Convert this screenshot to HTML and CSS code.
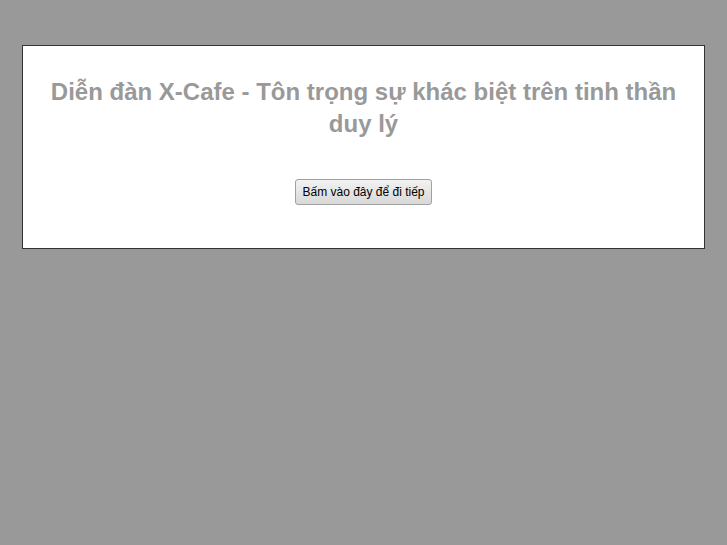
FILE: index.html
```html
<!DOCTYPE html>
<html lang="vi">
<head>
<meta charset="utf-8">
<title>Diễn đàn X-Cafe</title>
<link rel="stylesheet" href="styles.css">
</head>
<body>
<div class="panel">
  <h1 class="title">Diễn đàn X-Cafe - Tôn trọng sự khác biệt trên tinh thần duy lý</h1>
  <div class="actions">
    <button class="go" type="button">Bấm vào đây để đi tiếp</button>
  </div>
</div>
</body>
</html>
```

FILE: styles.css
```css
html, body {
  margin: 0;
  padding: 0;
  background: #999999;
  font-family: "Liberation Sans", Arial, sans-serif;
}
body {
  padding-top: 45px;
}
.panel {
  width: 683px;
  margin-left: 22px;
  background: #ffffff;
  border: 1px solid #333333;
  padding: 30px 20px 43px;
  box-sizing: border-box;
}
.title {
  margin: 0;
  font-size: 24px;
  line-height: 32px;
  font-weight: bold;
  color: #999999;
  text-align: center;
}
.actions {
  text-align: center;
  margin-top: 39px;
}
.go {
  font-family: "Liberation Sans", Arial, sans-serif;
  font-size: 12px;
  color: #000;
  height: 26px;
  padding: 0 6px;
  border: 1px solid #a0a0a0;
  border-radius: 3px;
  background: linear-gradient(#f2f2f2, #d8d8d8);
}
```
